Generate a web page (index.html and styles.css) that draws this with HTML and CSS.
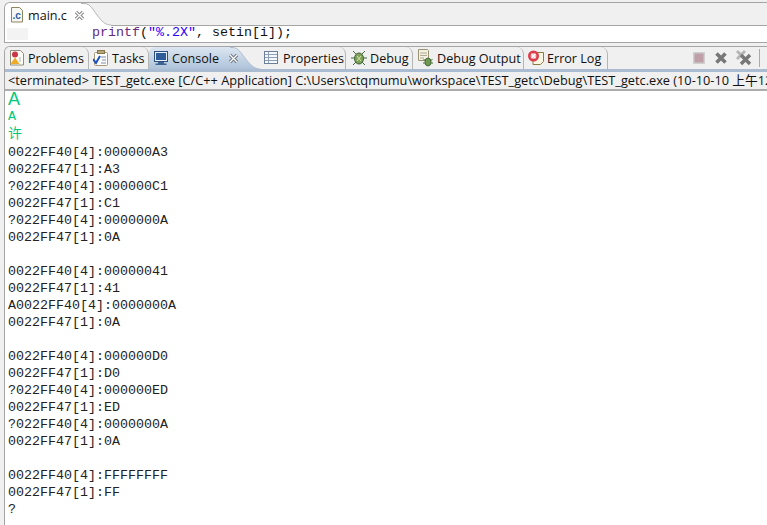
FILE: index.html
```html
<!DOCTYPE html>
<html lang="zh">
<head>
<meta charset="utf-8">
<title>main.c</title>
<link rel="stylesheet" href="styles.css">
</head>
<body>
<div class="app">
  <section class="editor">
    <div class="editor-tabs">
      <div class="tab editor-tab">
        <svg width="16" height="16" viewBox="0 0 16 16"><path d="M.5 .5h8l3 3v11.500H.5z" fill="#f6f6f2" stroke="#8d8560"/><text x="1.500" y="12" class="c-letter">.c</text></svg>
        <span class="tab-label">main.c</span>
        <svg class="close" width="11" height="11" viewBox="0 0 11 11"><path d="M2 2l7 7M9 2l-7 7" stroke="#858585" stroke-width="3.200" fill="none"/><path d="M2 2l7 7M9 2l-7 7" stroke="#fff" stroke-width="1.300" fill="none"/></svg>
        <svg class="tab-curve" width="30" height="23" viewBox="0 0 30 23"><path d="M0 .5h3c7 0 9 7 15 14 4 5 7 7.500 12 7.500v1H0z" fill="#fff"/><path d="M0 .5h3c7 0 9 7 15 14 4 5 7 7.500 12 7.500" fill="none" stroke="#b5b5b5"/></svg>
      </div>
    </div>
    <div class="code"><span class="gutter"></span><span class="code-text"><span class="fn">printf</span>(<span class="str">"%.2X"</span>, setin[i]);</span></div>
  </section>

  <section class="view">
    <div class="view-tabs">
      <div class="tab vtab t-problems">
        <svg width="16" height="16" viewBox="0 0 16 16"><path d="M1.500 .5h10l3 3v11.500h-13z" fill="#fbfbf6" stroke="#8f8f7c"/><circle cx="6" cy="4.500" r="3" fill="#c8384a"/><path d="M6 7.500l4.500 6.500h-9z" fill="#eeaa2a"/><path d="M11 7v5" stroke="#b7b7b0"/></svg>
        <span>Problems</span>
      </div>
      <div class="tab vtab t-tasks">
        <svg width="16" height="16" viewBox="0 0 16 16"><rect x="1.500" y="2.500" width="13" height="13" rx="1" fill="#fff" stroke="#a79a78"/><rect x="4.500" y=".5" width="7" height="3" fill="#b9a878" stroke="#86764e"/><path d="M8 7h5M9 10h4M8 13h5" stroke="#7f8aa0"/><path d="M0 9l3 4 4-7" fill="none" stroke="#1b4fbf" stroke-width="2"/></svg>
        <span>Tasks</span>
      </div>
      <div class="tab vtab active t-console">
        <svg width="16" height="16" viewBox="0 0 16 16"><rect x="1.500" y="1.500" width="13" height="10" fill="#e6eef8" stroke="#2c4f80"/><rect x="3" y="3" width="10" height="7" fill="#2d5d99"/><path d="M5 12h6v1.500H5zM2.500 13.500h11V15h-11z" fill="#3c6391"/></svg>
        <span>Console</span>
        <svg class="close" width="11" height="11" viewBox="0 0 11 11"><path d="M2 2l7 7M9 2l-7 7" stroke="#6f7886" stroke-width="3.200" fill="none"/><path d="M2 2l7 7M9 2l-7 7" stroke="#fff" stroke-width="1.300" fill="none"/></svg>
        <svg class="tab-curve console-curve" width="30" height="22" viewBox="0 0 30 22"><defs><linearGradient id="cg" x1="0" y1="0" x2="0" y2="1"><stop offset="0" stop-color="#dce6f1"/><stop offset="1" stop-color="#aec3da"/></linearGradient></defs><path d="M0 .5h2c7 0 9 6 15 13 4 5 8 8.500 13 8.500H0z" fill="url(#cg)"/><path d="M0 .5h2c7 0 9 6 15 13 4 5 8 8.500 13 8.500" fill="none" stroke="#aebccd"/></svg>
      </div>
      <div class="tab vtab t-props">
        <svg width="16" height="16" viewBox="0 0 16 16"><rect x=".5" y="1.500" width="13" height="12" fill="#f4f7fb" stroke="#6d7f98"/><path d="M1 4.500h12M1 7.500h12M1 10.500h12M4.500 2v11" stroke="#8fa0b6"/></svg>
        <span>Properties</span>
      </div>
      <div class="tab vtab t-debug">
        <svg width="16" height="16" viewBox="0 0 16 16"><g stroke="#3f6a45" fill="none"><path d="M2 1l3 3M14 1l-3 3M0 8h4M16 8h-4M2 15l3-3M14 15l-3-3"/></g><ellipse cx="8" cy="8.500" rx="4.500" ry="5.500" fill="#7fa25a" stroke="#3d5e35"/><path d="M6 6l4 5M10 6l-4 5" stroke="#d8e6a8"/></svg>
        <span>Debug</span>
      </div>
      <div class="tab vtab t-output">
        <svg width="16" height="18" viewBox="0 0 16 18"><path d="M.5 .5h9l1 1v10h-10z" fill="#f3f1e2" stroke="#9a9472"/><path d="M2 4h7M2 6.500h7M2 9h4" stroke="#b0aa90"/><ellipse cx="10" cy="13" rx="3" ry="4" fill="#6f9a52" stroke="#47693a"/><path d="M5.500 10l2 2M14.500 10l-2 2M5 14h2M15 14h-2" stroke="#47693a"/></svg>
        <span>Debug Output</span>
      </div>
      <div class="tab vtab t-error">
        <svg width="16" height="16" viewBox="0 0 16 16"><path d="M5 2.500h10.500v9l-3 3H5z" fill="#fbf6df" stroke="#8a7a46"/><circle cx="5.500" cy="6" r="5.500" fill="#dc3c4c"/><circle cx="5.500" cy="6" r="3" fill="#f4b0b4"/><path d="M3.500 4l4 4M7.500 4l-4 4" stroke="#fff" stroke-width="1.200"/></svg>
        <span>Error Log</span>
      </div>
      <div class="actions">
        <svg width="16" height="16" viewBox="0 0 16 16"><rect x="2.750" y="2.750" width="10.500" height="10.500" fill="#bf9fa8" stroke="#cfcfcf" stroke-width="1.500"/></svg>
        <svg width="16" height="16" viewBox="0 0 16 16"><path d="M3.500 3.500l9 9M12.500 3.500l-9 9" stroke="#777" stroke-width="3.600" fill="none"/></svg>
        <svg width="18" height="18" viewBox="0 0 18 18"><path d="M2 2l8 8M10 2l-8 8" stroke="#b5b5b5" stroke-width="2.800" fill="none"/><path d="M6 6l9 9M15 6l-9 9" stroke="#777" stroke-width="3.400" fill="none"/></svg>
        <span class="divider"></span>
      </div>
    </div>
    <div class="status">&lt;terminated&gt; TEST_getc.exe [C/C++ Application] C:\Users\ctqmumu\workspace\TEST_getc\Debug\TEST_getc.exe (10-10-10 上午12</div>
    <div class="console">
      <div class="input big">A</div>
      <div class="input small">A</div>
      <div class="input cjk">许</div>
      <pre class="output">0022FF40[4]:000000A3
0022FF47[1]:A3
?022FF40[4]:000000C1
0022FF47[1]:C1
?022FF40[4]:0000000A
0022FF47[1]:0A

0022FF40[4]:00000041
0022FF47[1]:41
A0022FF40[4]:0000000A
0022FF47[1]:0A

0022FF40[4]:000000D0
0022FF47[1]:D0
?022FF40[4]:000000ED
0022FF47[1]:ED
?022FF40[4]:0000000A
0022FF47[1]:0A

0022FF40[4]:FFFFFFFF
0022FF47[1]:FF
?</pre>
    </div>
  </section>
</div>
</body>
</html>
```

FILE: styles.css
```css
* { box-sizing: border-box; }
html, body { margin: 0; height: 100%; overflow: hidden; }
body { background: #f0f0f0; font-family: "Open Sans", "Noto Sans", sans-serif; color: #111; }
.app { width: 767px; height: 525px; display: flex; flex-direction: column; overflow: hidden; }

.editor { margin: 2px 0 0 4px; height: 41px; flex: none; border: solid #a5a5a5; border-width: 1px 0 1px 1px; border-top-left-radius: 6px; display: flex; flex-direction: column; overflow: hidden; }
.editor-tabs { height: 23px; flex: none; background: #f0f0f0; border-bottom: 1px solid #a5a5a5; display: flex; }
.tab { position: relative; display: flex; align-items: center; flex: none; white-space: nowrap; font-size: 12.6px; }
.tab svg { flex: none; }
.editor-tab { width: 76px; height: 23px; background: #fff; padding: 1px 0 0 6px; border-top-left-radius: 6px; }
.tab-label { margin-left: 1px; }
.close { position: relative; z-index: 1; }
.editor-tab .close { margin-left: 7px; }
.tab-curve { position: absolute; left: 76px; top: 0; }
.c-letter { font: bold 10px "Liberation Sans", sans-serif; fill: #2a5ca8; }
.code { height: 16px; flex: none; background: #fff; display: flex; font: 13.33px/14px "Liberation Mono", monospace; color: #111; padding-left: 2px; }
.gutter { width: 21px; height: 12px; margin-top: 2px; background: #f3f3f3; flex: none; }
.code-text { margin-left: 64px; white-space: pre; }
.fn { color: #642880; }
.str { color: #2a00ff; }

.view { margin: 3px 0 0 4px; flex: 1; display: flex; flex-direction: column; border: solid #a5a5a5; border-width: 1px 0 0 1px; border-top-left-radius: 6px; min-height: 0; overflow: hidden; }
.view-tabs { height: 25px; flex: none; background: #f0f0f0; display: flex; border-bottom: 3px solid #a9bcd1; }
.vtab { height: 22px; gap: 3px; border-right: 1px solid #b5b5b5; border-top-right-radius: 7px; padding-left: 4px; }
.t-problems { width: 84px; }
.t-tasks { width: 60px; }
.t-console { width: 81px; background: linear-gradient(#dce6f1, #aec3da); border-right: 0; border-radius: 6px 0 0 0; }
.t-console .close { margin-left: 6px; }
.console-curve { left: 81px; top: 0; }
.t-props { width: 116px; padding-left: 34px; }
.t-debug { width: 67px; padding-left: 5px; }
.t-output { width: 111px; padding-left: 5px; }
.t-error { width: 84px; }
.actions { margin-left: auto; display: flex; align-items: center; gap: 6px; padding-right: 7px; }
.divider { width: 1px; height: 18px; background: #aaa; }

.status { height: 19px; flex: none; background: #f0f0f0; border-bottom: 2px solid #adadad; font: 12.75px/17px "Open Sans", "Noto Sans CJK SC", sans-serif; white-space: nowrap; overflow: hidden; padding-left: 3px; }
.console { flex: 1; background: #fff; overflow: hidden; padding-left: 3px; }
.input { color: #00c87d; }
.big { font: 18px/17px "Liberation Sans", sans-serif; }
.small { font: 13.33px/16px "Liberation Mono", monospace; margin-top: 1px; }
.cjk { font: 14px/15px "Noto Sans CJK SC", sans-serif; }
.output { margin: 0; padding-top: 4px; font: 13.33px/17px "Liberation Mono", monospace; color: #222; }
```
